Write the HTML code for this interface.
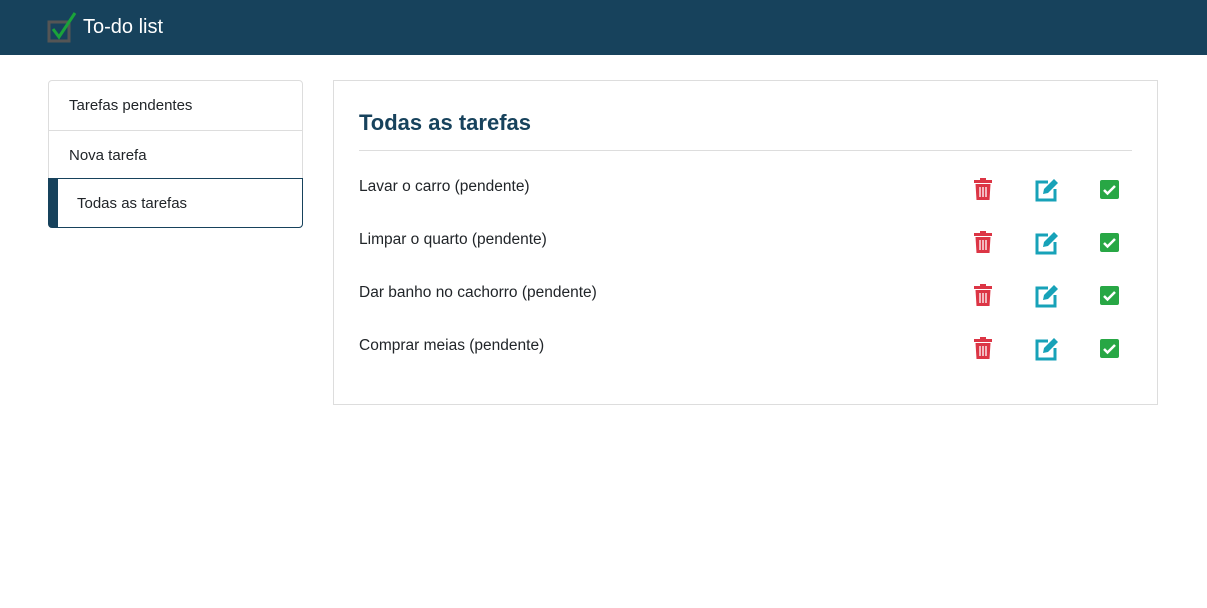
<!DOCTYPE html>
<html><head><meta charset="utf-8"><style>
*{box-sizing:border-box;margin:0;padding:0}
body{width:1207px;height:608px;background:#fff;font-family:"Liberation Sans","DejaVu Sans",sans-serif;color:#212529;position:relative;overflow:hidden}
.nav{height:55px;background:#17425c;position:relative}
.nav .t{position:absolute;left:83px;top:16px;color:#fff;font-size:20px}
.side{position:absolute;left:48px;top:80px;width:255px;border:1px solid #ddd;border-radius:4px}
.side div{height:49px;line-height:49px;padding-left:20px;font-size:15px;border-top:1px solid #ddd}
.side div:first-child{border-top:none}
.side .a{border:1px solid #17425c;border-left:10px solid #17425c;padding-left:19px;margin:-1px;border-radius:0 0 4px 4px;height:50px}
.card{position:absolute;left:333px;top:80px;width:825px;height:325px;border:1px solid #ddd}
h2{position:absolute;left:25px;top:29px;font-size:22px;color:#17425c;font-weight:bold}
.hr{position:absolute;left:25px;right:25px;top:69px;border-top:1px solid #ddd}
.row{position:absolute;left:25px;font-size:15.5px}
.ic{position:absolute}
</style></head><body>
<div class="nav">
<svg style="position:absolute;left:47px;top:11px" width="32" height="32" viewBox="0 0 32 32"><rect x="2" y="11" width="20" height="19" fill="none" stroke="#555" stroke-width="3"/><path d="M6 18 L12 26 L28 2" fill="none" stroke="#1aa33a" stroke-width="3"/></svg>
<span class="t">To-do list</span></div>
<div class="side"><div>Tarefas pendentes</div><div>Nova tarefa</div><div class="a">Todas as tarefas</div></div>
<div class="card"><h2>Todas as tarefas</h2><div class="hr"></div>
<div class="row" style="top:97px">Lavar o carro (pendente)</div>
<div class="row" style="top:150px">Limpar o quarto (pendente)</div>
<div class="row" style="top:203px">Dar banho no cachorro (pendente)</div>
<div class="row" style="top:256px">Comprar meias (pendente)</div>
</div>
<script>
for(let i=0;i<4;i++){const y=178+i*53;
document.body.insertAdjacentHTML('beforeend',
`<svg class="ic" style="left:973px;top:${y}px" width="20" height="22" viewBox="0 0 20 22"><rect x="1" y="2" width="18" height="3" fill="#dc3545"/><rect x="7" y="0" width="6" height="3" fill="#dc3545"/><path d="M2.5 6h15l-1 16h-13z" fill="#dc3545"/><path d="M7 9v10M10 9v10M13 9v10" stroke="#fff" stroke-width="1.3"/></svg>
<svg class="ic" style="left:1034px;top:${y}px" width="26" height="24" viewBox="0 0 26 24"><path d="M14 4H3v18h18V11" fill="none" stroke="#17a2b8" stroke-width="3"/><path d="M9 16l1-5L20 1l4 4-10 10z" fill="#17a2b8"/></svg>
<svg class="ic" style="left:1100px;top:${y+2}px" width="19" height="19" viewBox="0 0 19 19"><rect width="19" height="19" rx="2" fill="#28a745"/><path d="M4 10l3.5 3.5L15 6" fill="none" stroke="#fff" stroke-width="2.5"/></svg>`);}
</script>
</body></html>
